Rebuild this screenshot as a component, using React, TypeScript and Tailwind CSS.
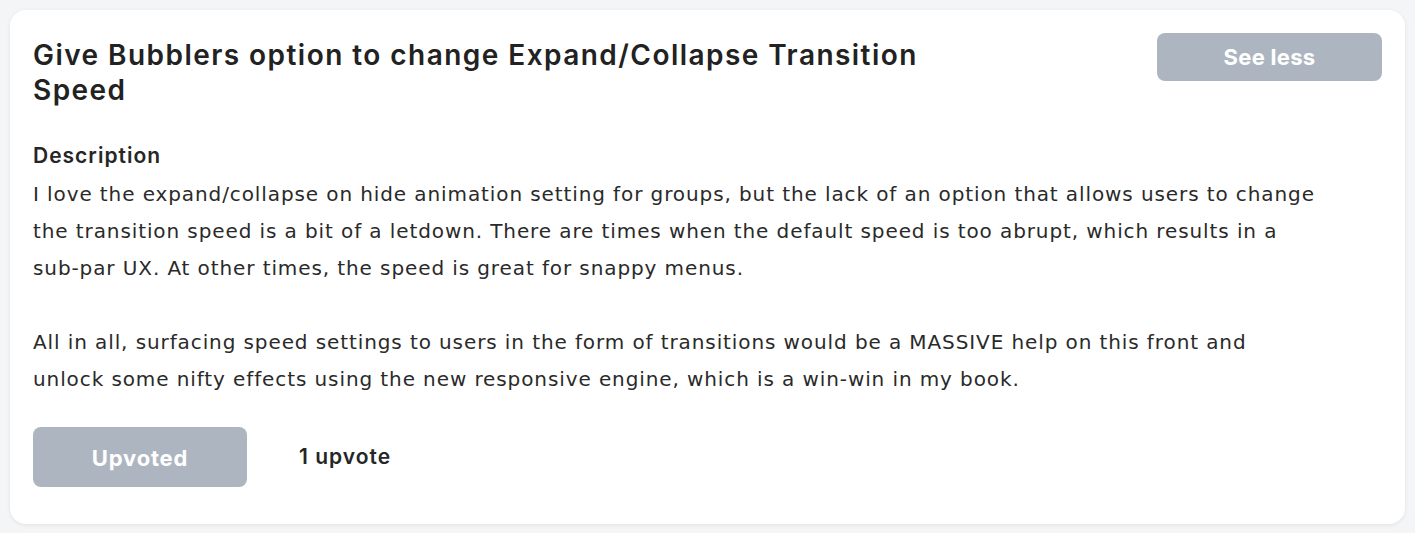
const App: React.FC = () => {
  return (
    <main className="min-h-[533px] bg-[#f4f5f7] p-[10px] font-['Inter',sans-serif] text-[#262626]">
      <section className="rounded-2xl bg-white px-[23px] pt-[23px] pb-[37px] shadow-[0_1px_4px_rgba(0,0,0,0.08)]">
        <div className="flex items-start justify-between">
          <h1 className="mt-[5px] w-[920px] text-[28px] font-semibold leading-[35px] tracking-[1.45px] text-[#222]">
            Give Bubblers option to change Expand/Collapse Transition
            <br />
            Speed
          </h1>
          <button className="h-12 w-[225px] rounded-lg bg-[#adb6c0] text-[22px] font-bold tracking-[0.3px] text-white">
            See less
          </button>
        </div>

        <h2 className="mt-[35px] text-[21px] font-semibold leading-[26px] tracking-[1px]">Description</h2>
        <p className="mt-[7px] whitespace-nowrap font-['DejaVu_Sans',sans-serif] text-[20px] leading-[37px] tracking-[0.9px] text-[#2a2a2a]">
          I love the expand/collapse on hide animation setting for groups, but the lack of an option that allows users to change
          <br />
          the transition speed is a bit of a letdown. There are times when the default speed is too abrupt, which results in a
          <br />
          sub-par UX. At other times, the speed is great for snappy menus.
        </p>
        <p className="mt-[37px] whitespace-nowrap font-['DejaVu_Sans',sans-serif] text-[20px] leading-[37px] tracking-[0.9px] text-[#2a2a2a]">
          All in all, surfacing speed settings to users in the form of transitions would be a MASSIVE help on this front and
          <br />
          unlock some nifty effects using the new responsive engine, which is a win-win in my book.
        </p>

        <div className="mt-[29px] flex items-center gap-[52px]">
          <button className="h-[60px] w-[214px] rounded-lg bg-[#adb6c0] pt-[3px] text-[22px] font-bold tracking-[0.8px] text-white">
            Upvoted
          </button>
          <span className="text-[21px] font-semibold tracking-[1px]">1 upvote</span>
        </div>
      </section>
    </main>
  )
}

export default App
